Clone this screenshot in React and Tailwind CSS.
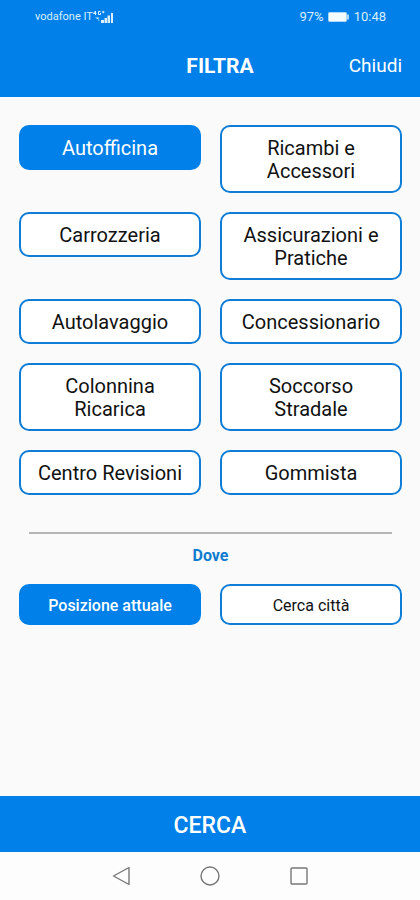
import { useState } from "react";

const CATEGORIES = [
  "Autofficina",
  "Ricambi e Accessori",
  "Carrozzeria",
  "Assicurazioni e Pratiche",
  "Autolavaggio",
  "Concessionario",
  "Colonnina Ricarica",
  "Soccorso Stradale",
  "Centro Revisioni",
  "Gommista",
];

const PLACES = ["Posizione attuale", "Cerca città"];

function Option({ label, selected, onSelect, small }) {
  return (
    <button
      type="button"
      aria-pressed={selected}
      onClick={onSelect}
      className={
        "self-start rounded-[10px] border-2 pt-[10px] pb-[8px] text-center " +
        (small ? "px-2 text-[16px] leading-[19px] " : "px-3 text-[20px] leading-[23px] ") +
        (small && selected ? "font-medium " : "") +
        (selected ? "border-[#0080e8] bg-[#0080e8] text-white" : "border-[#0f7cd6] bg-white text-[#111111]")
      }
    >
      {label}
    </button>
  );
}

function StatusBar() {
  return (
    <div className="flex h-[33px] items-center justify-between pr-[34px] pl-[35px] text-[#d9efff]">
      <div className="flex items-center">
        <span className="text-[11px] leading-[16px]">vodafone IT</span>
        <svg width="21" height="14" viewBox="0 0 21 14" fill="none" stroke="currentColor" aria-hidden="true">
          <path d="M2.500 5V1L0.500 3.500H3.500M7.500 1.500H5.500V4.500H7.500V3M9 2h2.500M10.200 0.800v2.500" />
          <path d="M2 7.500h4l-1 3h2z" fill="currentColor" stroke="none" />
          <path d="M8 10h3v3h-3zM11.500 8h2.500v5h-2.500zM14.500 5.500h2.500v7.500h-2.500zM18 3h2v10h-2z" fill="currentColor" stroke="none" />
        </svg>
      </div>
      <div className="flex items-center gap-[3px] text-[13px] leading-[16px]">
        <span>97%</span>
        <svg width="24" height="10" viewBox="0 0 24 10" aria-hidden="true">
          <rect x="1.500" y="0.500" width="18" height="9" rx="1" fill="#f4fbff" stroke="#a9d8fb" />
          <path d="M20 2.500v5h2v-5z" fill="#a9d8fb" />
        </svg>
        <span>10:48</span>
      </div>
    </div>
  );
}

export default function App() {
  const [category, setCategory] = useState("Autofficina");
  const [place, setPlace] = useState("Posizione attuale");

  return (
    <div className="flex min-h-screen flex-col bg-[#fafafa] font-['Roboto',sans-serif]">
      <header className="bg-[#0080e8] text-white">
        <StatusBar />
        <div className="grid h-[64px] grid-cols-[1fr_auto_1fr] items-center pt-[2px] pr-[18px] pl-[38px]">
          <span />
          <h1 className="text-[21px] leading-[24px] font-bold">FILTRA</h1>
          <button type="button" className="justify-self-end text-[19px] leading-[24px]">
            Chiudi
          </button>
        </div>
      </header>

      <main className="flex grow flex-col pt-[28px] pr-[18px] pl-[19px]">
        <div className="grid grid-cols-2 gap-[19px]">
          {CATEGORIES.map((name) => (
            <Option key={name} label={name} selected={category === name} onSelect={() => setCategory(name)} />
          ))}
        </div>

        <hr className="mx-[10px] mt-[37px] border-t-2 border-[#b5b5b5]" />
        <h2 className="mt-[12px] text-center text-[16px] leading-[19px] font-bold text-[#0f7cd0]">Dove</h2>

        <div className="mt-[19px] grid grid-cols-2 gap-[19px]">
          {PLACES.map((name) => (
            <Option key={name} small label={name} selected={place === name} onSelect={() => setPlace(name)} />
          ))}
        </div>
      </main>

      <button type="button" className="h-[56px] bg-[#0080e8] pt-[3px] text-[23px] leading-[28px] font-medium text-white">
        CERCA
      </button>

      <nav className="flex h-[48px] items-center justify-center gap-[69px] bg-[#fdfdfd] text-[#777777]">
        <button type="button" aria-label="Indietro">
          <svg width="20" height="20" viewBox="0 0 20 20" fill="none" stroke="currentColor" strokeWidth="1.400" strokeLinejoin="round">
            <path d="M18 1.500v17L2.500 10z" />
          </svg>
        </button>
        <button type="button" aria-label="Home">
          <svg width="20" height="20" viewBox="0 0 20 20" fill="none" stroke="currentColor" strokeWidth="1.400">
            <circle cx="10" cy="10" r="9" />
          </svg>
        </button>
        <button type="button" aria-label="Recenti">
          <svg width="20" height="20" viewBox="0 0 20 20" fill="none" stroke="currentColor" strokeWidth="1.400">
            <rect x="2" y="2" width="16" height="16" rx="1" />
          </svg>
        </button>
      </nav>
    </div>
  );
}
